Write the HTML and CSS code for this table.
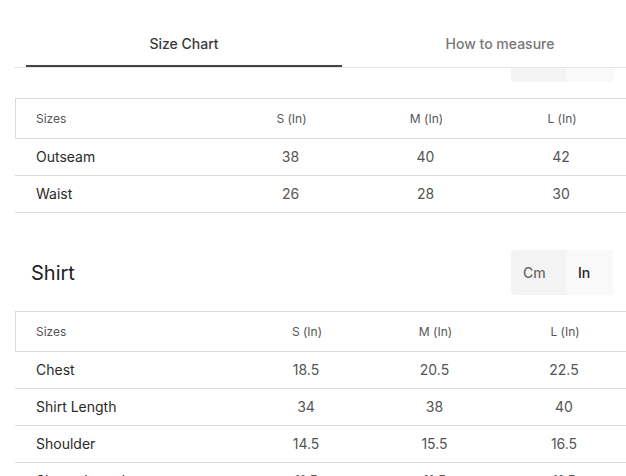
FILE: index.html
```html
<!DOCTYPE html>
<html>
<head>
<meta charset="utf-8">
<link rel="stylesheet" href="styles.css">
</head>
<body>
<header class="header">
  <nav class="tabs">
    <div class="tab active">Size Chart</div>
    <div class="tab">How to measure</div>
  </nav>
</header>
<main class="content">
  <section class="section">
    <div class="title-row">
      <h2 class="title">Pants</h2>
      <div class="toggle"><span class="seg">Cm</span><span class="seg on">In</span></div>
    </div>
    <div class="chart pants">
      <div class="row head"><div class="c first">Sizes</div><div class="c">S (In)</div><div class="c">M (In)</div><div class="c">L (In)</div></div>
      <div class="row"><div class="c first">Outseam</div><div class="c">38</div><div class="c">40</div><div class="c">42</div></div>
      <div class="row"><div class="c first">Waist</div><div class="c">26</div><div class="c">28</div><div class="c">30</div></div>
    </div>
  </section>
  <section class="section">
    <div class="title-row">
      <h2 class="title">Shirt</h2>
      <div class="toggle"><span class="seg">Cm</span><span class="seg on">In</span></div>
    </div>
    <div class="chart shirt">
      <div class="row head"><div class="c first">Sizes</div><div class="c">S (In)</div><div class="c">M (In)</div><div class="c">L (In)</div></div>
      <div class="row"><div class="c first">Chest</div><div class="c">18.5</div><div class="c">20.5</div><div class="c">22.5</div></div>
      <div class="row"><div class="c first">Shirt Length</div><div class="c">34</div><div class="c">38</div><div class="c">40</div></div>
      <div class="row"><div class="c first">Shoulder</div><div class="c">14.5</div><div class="c">15.5</div><div class="c">16.5</div></div>
      <div class="row"><div class="c first">Sleeve Length</div><div class="c">11.5</div><div class="c">11.5</div><div class="c">11.5</div></div>
    </div>
  </section>
</main>
</body>
</html>
```

FILE: styles.css
```css
* { box-sizing: border-box; }
html, body { margin: 0; padding: 0; background: #fff; }
body {
  font-family: Inter, "Noto Sans", sans-serif;
  width: 626px;
  height: 476px;
  overflow: hidden;
  color: #333;
}
.header {
  position: fixed;
  top: 0; left: 0; right: 0;
  height: 68px;
  background: #fff;
  padding-left: 14px;
  z-index: 10;
}
.tabs {
  display: flex;
  height: 68px;
  border-bottom: 1px solid #e6e6e6;
  padding-left: 12px;
  overflow: hidden;
}
.tab {
  flex: 0 0 316px;
  height: 67px;
  padding-top: 19px;
  display: flex;
  align-items: center;
  justify-content: center;
  font-size: 14px;
  font-weight: 500;
  color: #777;
}
.tab.active {
  color: #3a3a3a;
  box-shadow: inset 0 -2px 0 #444;
}
.content {
  padding: 37px 0 0 15px;
}
.section + .section { margin-top: 37px; }
.title-row {
  display: flex;
  align-items: center;
  justify-content: space-between;
  height: 45px;
  padding: 0 13px 0 16px;
}
.title {
  margin: 0;
  font-size: 20px;
  font-weight: 400;
  color: #222;
}
.toggle {
  display: flex;
  height: 45px;
  border-radius: 4px;
  overflow: hidden;
  background: #f3f3f3;
}
.seg {
  width: 55px;
  padding-left: 12px;
  display: flex;
  align-items: center;
  font-size: 14px;
  font-weight: 500;
  color: #6b6b6b;
}
.seg.on {
  width: 47px;
  background: #f9f9f9;
  color: #222;
  border-radius: 4px;
}
.chart { margin-top: 16px; width: 640px; }
.row {
  display: grid;
  height: 37px;
  border-bottom: 1px solid #dcdcdc;
  align-items: center;
  padding-bottom: 1px;
}
.pants .row { grid-template-columns: 208px 135px 135px 136px; }
.shirt .row { grid-template-columns: 227px 128px 129px 130px; }
.row.head {
  height: 41px;
  border-top: 1px solid #dcdcdc;
  border-left: 1px solid #dcdcdc;
  padding-bottom: 0;
}
.c {
  text-align: center;
  font-size: 14px;
  color: #555;
}
.c.first {
  text-align: left;
  padding-left: 20px;
  color: #2a2a2a;
  font-weight: 400;
}
.row:not(.head) .c.first { padding-left: 21px; }
.head .c { font-size: 12px; color: #555; }
.head .c.first { color: #555; }
```
